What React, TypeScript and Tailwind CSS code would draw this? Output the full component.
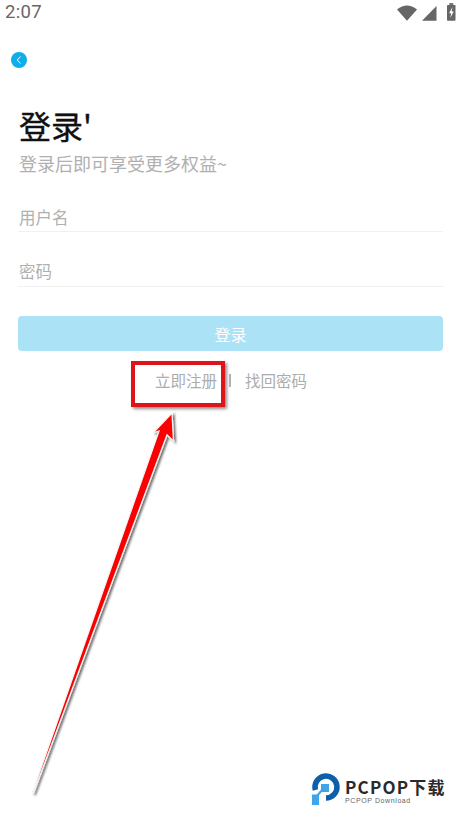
export default function App() {
  return (
    <div className="relative w-[458px] h-[820px] bg-white overflow-hidden font-['Noto_Sans_CJK_SC',sans-serif]">
      <div className="h-[26px] flex items-center justify-between pl-[5px] text-[#666666]">
        <span className="text-[18.5px] font-['Roboto',sans-serif] tracking-[0.3px]">2:07</span>
        <svg width="68" height="26" viewBox="390 0 68 26">
          <path d="M397 9.5 Q407 1.5 417 9.5 L407 20.8 Z" fill="#666" />
          <path d="M422 20.8 L436.5 6 V20.8 Z" fill="#666" />
          <rect x="447" y="5" width="8.5" height="15.8" rx="0.8" fill="#666" />
          <rect x="449.3" y="3" width="4" height="2" fill="#777" />
          <path d="M452.5 7 L449 13.2 H451.2 L450.2 18 L453.8 11.4 H451.6 Z" fill="#fff" />
        </svg>
      </div>

      <div className="pl-[11px] pt-[26px]">
        <div className="w-4 h-4 rounded-full bg-[#0FAEEA] flex items-center justify-center">
          <svg width="8" height="10" viewBox="0 0 8 10">
            <path d="M5.5 1.5 L2.2 5 L5.5 8.5" stroke="#fff" strokeWidth="1" fill="none" />
          </svg>
        </div>
      </div>

      <div className="pl-[18px] pr-[15px] pt-[35px]">
        <h1 className="text-[32px] leading-[44px] font-normal text-[#111111] [-webkit-text-stroke:0.35px_#111111] pl-px">登录'</h1>
        <p className="text-[18px] leading-[24px] text-[#b0b0b0] pl-px mt-[4px]">登录后即可享受更多权益~</p>

        <div className="mt-[29px] h-[28px] border-b border-[#f0f0f0] text-[16.5px] leading-[26px] text-[#b0b0b0] pl-px">用户名</div>
        <div className="mt-[26px] h-[29px] border-b border-[#f0f0f0] text-[16.5px] leading-[26px] text-[#b0b0b0] pl-px">密码</div>

        <button className="mt-[29px] w-full h-[35px] rounded bg-[#ABE2F6] text-white text-[16px] flex items-center justify-center">登录</button>

        <div className="mt-[19px] flex items-center text-[15.5px] leading-[20px] text-[#acacac] pl-[137px]">
          <span>立即注册</span>
          <span className="ml-[12px] w-[2px] h-[13px] bg-[#b5b5b5]" />
          <span className="ml-[14px]">找回密码</span>
        </div>
      </div>

      {/* annotation overlay */}
      <div className="absolute left-[131px] top-[361px] w-[94px] h-[46px] border-4 border-[#DF141A] shadow-[2px_2px_3px_rgba(0,0,0,0.45)]" />
      <svg className="absolute left-0 top-0 pointer-events-none" width="458" height="820" viewBox="0 0 458 820">
        <defs>
          <filter id="sh" x="-20%" y="-20%" width="140%" height="140%">
            <feDropShadow dx="2" dy="1.5" stdDeviation="1.2" floodColor="#000" floodOpacity="0.55" />
          </filter>
        </defs>
        <path
          d="M172 413 L173.5 441 L167 435 L33.5 793 L32.5 792.6 L159 431 L153 433 Z"
          fill="#FA0000"
          stroke="#f4f4f4"
          strokeWidth="1.3"
          filter="url(#sh)"
        />
      </svg>

      {/* watermark logo */}
      <div className="absolute left-[311px] top-[772px] flex items-start">
        <svg width="30" height="34" viewBox="311 772 30 34">
          <path d="M315.4 790 A11 11 0 1 1 326 798" stroke="#0C5FA8" strokeWidth="5.5" fill="none" />
          <path d="M322 790 L317 796" stroke="#3FA5E8" strokeWidth="2" />
          <rect x="312" y="794.5" width="7" height="10.5" fill="#3FA5E8" />
          <rect x="321" y="784" width="8" height="8" fill="#3FA5E8" />
        </svg>
        <div className="ml-[4px] mt-[6px] flex flex-col">
          <span className="text-[17px] leading-[18px] h-[18px] font-bold text-[#2a2a2a] tracking-[1.2px]">PCPOP下载</span>
          <span className="mt-[1px] text-[7px] leading-[8px] text-[#666666] tracking-[0.6px] font-['Liberation_Sans',sans-serif]">PCPOP Download</span>
        </div>
      </div>
    </div>
  );
}
